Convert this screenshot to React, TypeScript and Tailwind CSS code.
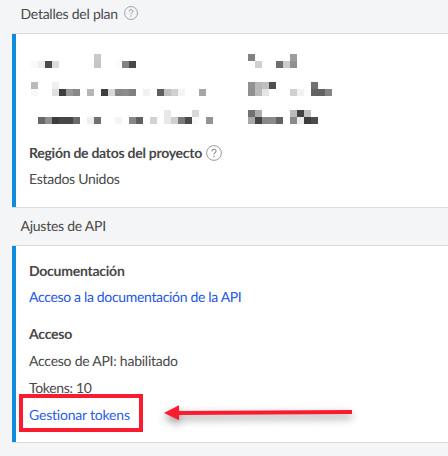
import React from 'react';

// [column, row, grey level]
const cells: [number, number, string][] = [
  [9, 0, '#c9c9c9'], [31, 0, '#828282'], [37, 0, '#9c9c9c'],
  [0, 1, '#f9f9f9'], [1, 1, '#ededed'], [2, 1, '#4a4a4a'], [3, 1, '#dcdcdc'], [9, 1, '#c5c5c5'],
  [12, 1, '#fcfcfc'], [13, 1, '#828282'], [14, 1, '#484848'], [32, 1, '#d0d0d0'], [35, 1, '#6e6e6e'],
  [36, 1, '#cccccc'], [37, 1, '#909090'], [38, 1, '#fdfdfd'],
  [0, 4, '#bababa'], [3, 4, '#f0f0f0'], [31, 4, '#929292'], [32, 4, '#b8b8b8'], [33, 4, '#bfbfbf'],
  [34, 4, '#4e4e4e'], [40, 4, '#727272'],
  [0, 5, '#f8f8f8'], [3, 5, '#e0e0e0'], [4, 5, '#3e3e3e'], [5, 5, '#989898'], [6, 5, '#888888'],
  [8, 5, '#b5b5b5'], [10, 5, '#3e3e3e'], [11, 5, '#d8d8d8'], [12, 5, '#888888'], [13, 5, '#8c8c8c'],
  [14, 5, '#7f7f7f'], [16, 5, '#f2f2f2'], [18, 5, '#606060'], [19, 5, '#c0c0c0'], [20, 5, '#d0d0d0'],
  [21, 5, '#f4f4f4'], [24, 5, '#a6a6a6'], [31, 5, '#909090'], [32, 5, '#bbbbbb'], [33, 5, '#e5e5e5'],
  [37, 5, '#d0d0d0'], [38, 5, '#f2f2f2'], [39, 5, '#fcfcfc'], [40, 5, '#626262'], [41, 5, '#626262'],
  [42, 5, '#858585'],
  [19, 8, '#e8e8e8'], [23, 8, '#d8d8d8'], [31, 8, '#727272'], [32, 8, '#adadad'], [37, 8, '#bbbbbb'],
  [38, 8, '#424242'], [39, 8, '#c0c0c0'],
  [1, 9, '#686868'], [2, 9, '#909090'], [3, 9, '#3c3c3c'], [4, 9, '#484848'], [5, 9, '#464646'],
  [6, 9, '#6a6a6a'], [8, 9, '#eeeeee'], [9, 9, '#707070'], [12, 9, '#f4f4f4'], [14, 9, '#888888'],
  [15, 9, '#606060'], [17, 9, '#d2d2d2'], [19, 9, '#e8e8e8'], [20, 9, '#d0d0d0'], [21, 9, '#7a7a7a'],
  [22, 9, '#4a4a4a'], [23, 9, '#f9f9f9'], [25, 9, '#939393'], [31, 9, '#a8a8a8'], [32, 9, '#444444'],
  [33, 9, '#888888'], [34, 9, '#8a8a8a'], [35, 9, '#626262'], [37, 9, '#8a8a8a'], [38, 9, '#ebebeb'],
  [39, 9, '#3c3c3c'], [40, 9, '#4c4c4c'],
];

const Mosaic: React.FC = () => (
  <svg width="301" height="70" viewBox="0 0 43 10" shapeRendering="crispEdges" className="ml-0.5 block">
    {cells.map(([x, y, fill]) => (
      <rect key={`${x}-${y}`} x={x} y={y} width="1" height="1" fill={fill} />
    ))}
  </svg>
);

const HelpIcon: React.FC<{ className: string }> = ({ className }) => (
  <svg viewBox="0 0 16 16" fill="none" stroke="#8e8e8e" className={className}>
    <circle cx="8" cy="8" r="7.4" strokeWidth="0.9" />
    <path d="M5.9 6.3c0-1.3.9-2.1 2.1-2.1s2.1.8 2.1 1.9c0 1.5-2.1 1.6-2.1 3.4" strokeWidth="1.1" />
    <path d="M8 10.8v1.3" strokeWidth="1.2" />
  </svg>
);

const App: React.FC = () => {
  return (
    <main className="h-[456px] w-[448px] overflow-hidden bg-[#f4f5f7] pl-3 font-['Lato',sans-serif] text-[14px] tracking-[-0.25px] text-[#484848] [text-rendering:geometricPrecision]">
      <header className="flex h-[34px] items-start border-b border-[#dcdcdc] pl-[8.5px]">
        <h2 className="leading-7">Detalles del plan</h2>
        <HelpIcon className="mt-1.5 ml-1.5 size-3.5" />
      </header>
      <section className="h-[173px] border-l-4 border-[#118bdb] bg-white pt-5 pl-[13px]">
        <Mosaic />
        <div className="mt-4 flex h-[26px] items-center">
          <h3 className="-mt-0.5 font-bold tracking-[-0.27px]">Región de datos del proyecto</h3>
          <HelpIcon className="ml-1 size-4" />
        </div>
        <p className="leading-[25px] tracking-[-0.28px]">Estados Unidos</p>
      </section>
      <header className="h-[39px] border-y border-[#dcdcdc] pl-[8.5px]">
        <h2 className="leading-[35px]">Ajustes de API</h2>
      </header>
      <section className="relative h-[196px] border-l-4 border-[#118bdb] bg-white pt-3 pl-[13px]">
        <h3 className="leading-[26px] font-bold">Documentación</h3>
        <a href="#" className="block leading-[25px] tracking-[-0.33px] text-[#2456e8]">Acceso a la documentación de la API</a>
        <h3 className="mt-[11px] leading-[27px] font-bold">Acceso</h3>
        <p className="leading-[27px]">Acceso de API: habilitado</p>
        <p className="leading-[27px] tracking-[-0.33px]">Tokens: 10</p>
        <a href="#" className="block leading-[27px] tracking-[-0.2px] text-[#2b5cf0]">Gestionar tokens</a>
        <div className="absolute top-[148px] left-[3px] h-[38px] w-[124px] border-4 border-[#fb1b2e]" />
        <svg width="220" height="45" viewBox="0 0 220 45" className="absolute top-36 left-[134px]">
          <g fill="#fb1b2e" className="drop-shadow-[0_4px_4px_rgba(0,0,0,0.45)]">
            <path d="M14 23 29 15.3V21L202 20v4L29 25v5.3z" />
          </g>
        </svg>
      </section>
      <div className="h-px bg-[#dcdcdc]" />
    </main>
  );
};

export default App;
